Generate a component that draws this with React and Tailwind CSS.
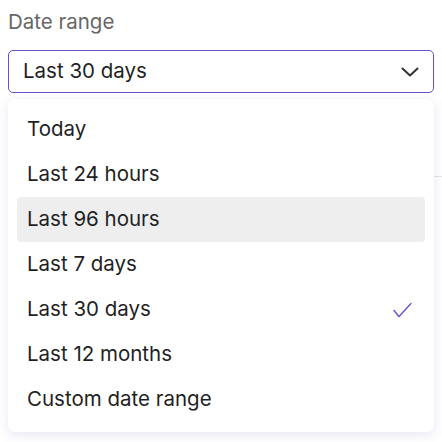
import { useState } from "react";

const options = [
  "Today",
  "Last 24 hours",
  "Last 96 hours",
  "Last 7 days",
  "Last 30 days",
  "Last 12 months",
  "Custom date range",
];

export default function App() {
  const [selected] = useState("Last 30 days");
  const hovered = "Last 96 hours";

  return (
    <div
      className="relative w-[442px] h-[442px] bg-white px-2 pt-[9px] overflow-hidden"
      style={{ fontFamily: "Inter, 'Noto Sans', sans-serif" }}
    >
      {/* faint background row behind the menu */}
      <div className="absolute right-0 top-[176px] w-[10px] h-px bg-[#e5e5e5]" />

      <div className="text-[20.5px] leading-[26px] text-[#666666]">Date range</div>

      <button className="mt-[15px] w-full h-[43px] flex items-center justify-between pl-[14px] pr-[14px] border border-[#6c4fd0] rounded-[5px] bg-white text-left">
        <span className="text-[20.5px] text-[#1f1f1f]">{selected}</span>
        <svg width="18" height="10" viewBox="0 0 18 10" fill="none">
          <path d="M1.5 1.5L9 8.5L16.5 1.5" stroke="#333333" strokeWidth="2" strokeLinecap="round" strokeLinejoin="round" />
        </svg>
      </button>

      <div className="relative mt-[6px] rounded-[7px] bg-white px-[9px] pt-2 pb-[10px] shadow-[0_3px_12px_rgba(90,70,170,0.14)]">
        {options.map((o) => (
          <div
            key={o}
            className={`h-[45px] flex items-center justify-between pl-[10px] pr-[13px] rounded-[4px] text-[20.5px] text-[#1f1f1f] ${
              o === hovered ? "bg-[#eeeeee]" : ""
            }`}
          >
            <span>{o}</span>
            {o === selected && (
              <svg width="19" height="16" viewBox="0 0 19 16" fill="none">
                <path d="M1 8.5L6 14.5L18 1.5" stroke="#6c4fd0" strokeWidth="1.4" strokeLinecap="round" strokeLinejoin="round" />
              </svg>
            )}
          </div>
        ))}
      </div>
    </div>
  );
}
